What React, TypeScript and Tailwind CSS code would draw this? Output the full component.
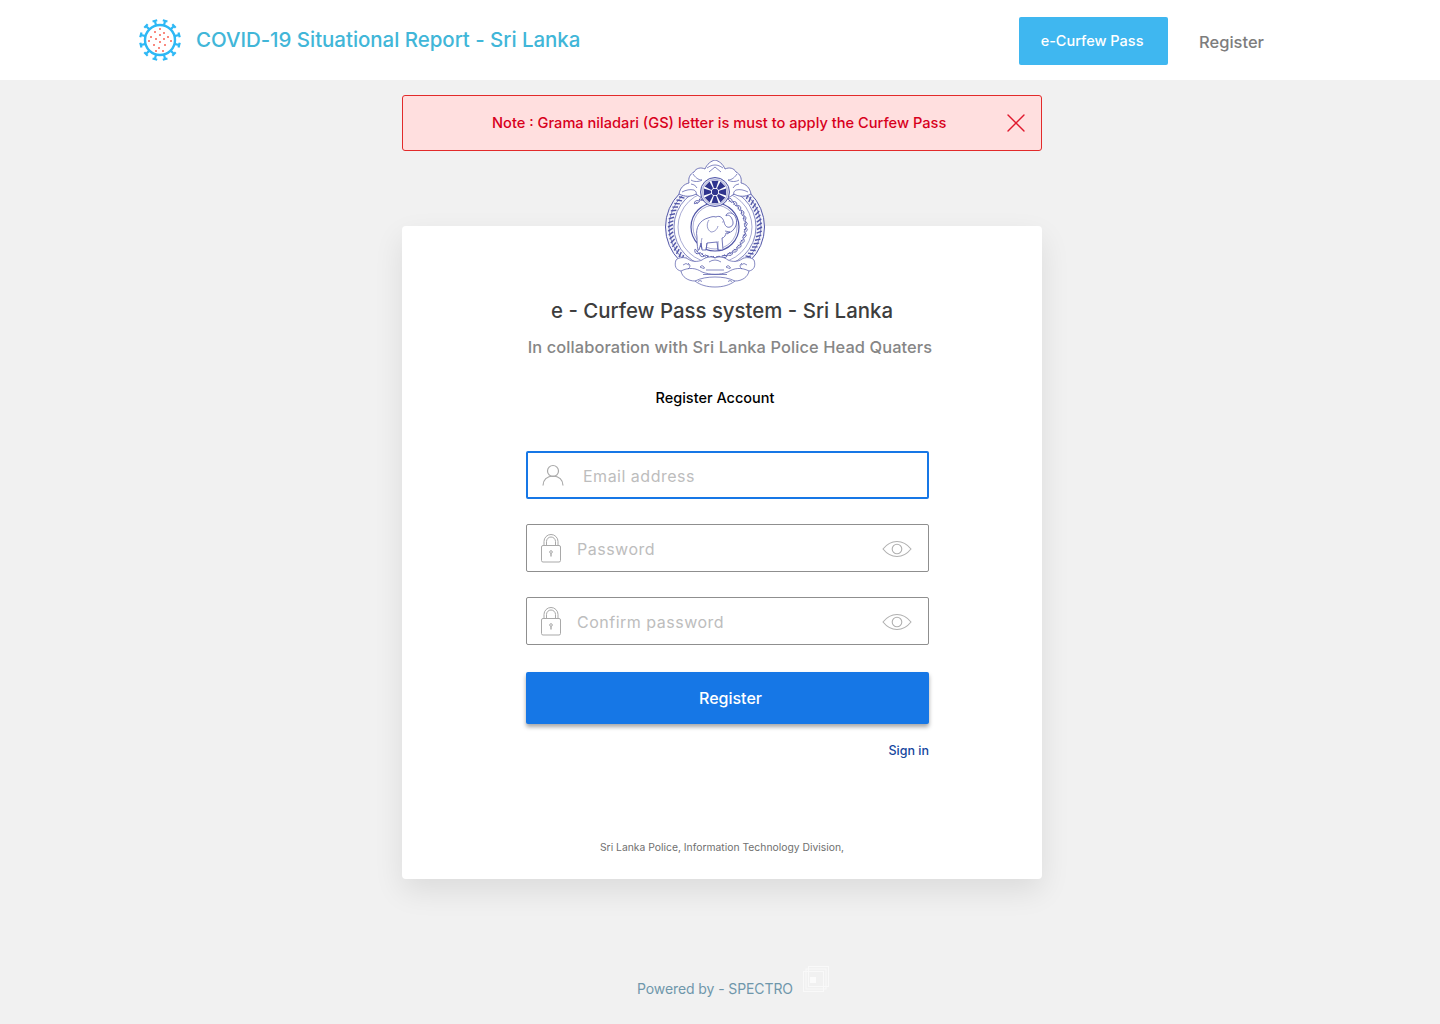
import { X } from "lucide-react";

const FONT = "font-['Inter','Noto_Sans',sans-serif]";

function VirusLogo() {
  const spikes = Array.from({ length: 12 }, (_, i) => i * 30);
  const dots = [
    [22, 11], [17, 14], [26, 15], [22, 17], [13, 19], [30, 19], [18, 21], [26, 21],
    [11, 23], [22, 24], [33, 23], [16, 27], [27, 27], [21, 30], [25, 33], [18, 33],
  ];
  return (
    <svg width="44" height="44" viewBox="0 0 44 44" className="shrink-0">
      <circle cx="22" cy="22" r="15" fill="none" stroke="#2eb8f5" strokeWidth="2.400" />
      {spikes.map((a) => (
        <g key={a} transform={`rotate(${a + 15} 22 22)`}>
          <path d="M22 7V2.500M19.600 2.200h4.800" stroke="#2eb8f5" strokeWidth="2.200" fill="none" />
        </g>
      ))}
      {dots.map(([x, y], i) => (
        <rect key={i} x={x - 1} y={y - 1} width="2" height="2" fill="#f98a80" />
      ))}
    </svg>
  );
}

function PoliceEmblem() {
  const c = "#5257a8";
  const spokes = Array.from({ length: 8 }, (_, i) => i * 45);
  const ticks = Array.from({ length: 72 }, (_, i) => i * 5);
  const marks = Array.from({ length: 24 }, (_, i) => i * 11 - 127);
  return (
    <svg width="100" height="128" viewBox="0 0 100 128" fill="none" stroke={c} strokeWidth="0.7">
      <ellipse cx="50" cy="67" rx="49.500" ry="48" fill="#f6f6fb" strokeWidth="1" />
      <ellipse cx="50" cy="67" rx="46" ry="44.500" />
      {ticks.map((a) => (
        <path key={a} d="M50 20l2.500 5" strokeWidth="1.400" transform={`rotate(${a} 50 67)`} />
      ))}
      <ellipse cx="50" cy="67" rx="41" ry="40" fill="#ffffff" />
      <ellipse cx="50" cy="67" rx="37" ry="36" strokeWidth="0.5" />
      {marks.map((a) => (
        <path
          key={a}
          d="M47.500 36q2.500-3 5 0t-5 0M50 36v2"
          strokeWidth="0.8"
          transform={`rotate(${a + 90} 50 67)`}
        />
      ))}
      <circle cx="50" cy="67" r="24" fill="#ffffff" strokeWidth="1.200" />
      <circle cx="50" cy="67" r="22" strokeWidth="0.5" />
      {/* elephant */}
      <path
        d="M33 90c-1-5-1-9-1-13-2-9 3-17 11-19 3-1 5-2 8-1 4-2 7 1 8 5 1 4 3 6 6 5 3-1 4-4 2-8-1-3-4-5-6-3 0-3 4-4 7-2 4 3 5 10 1 15-2 3-5 4-8 4 0 2-2 5-4 5l1 12h-5l-1-8-10 1-1 7h-4l-1-7-2 7z"
        fill="#ffffff"
        strokeWidth="0.8"
      />
      <path d="M44 60c-3 4-2 10 2 12 3 0 6-2 7-6M37 78c-1 3-1 7 0 11M42 83l-1 7M53 81v9" strokeWidth="0.6" />
      <path d="M60 71l5 1-3 2M57 62h.8" strokeWidth="0.7" />
      {/* side scrolls */}
      <path
        d="M14 34c1-6 5-10 10-11-1-5 1-9 5-11 2-4 7-5 11-3 2-5 6-8 10-9 4 1 8 4 10 9 4-2 9-1 11 3 4 2 6 6 5 11 5 1 9 5 10 11-6 3-12 3-17 0-8 8-30 8-38 0-5 3-11 3-17 0z"
        fill="#ffffff"
        strokeWidth="0.8"
      />
      <path d="M42 8c3-2 5-3 8-3s5 1 8 3M44 12l6-5 6 5M28 14c2 3 5 6 9 6-3 2-8 2-11 0M72 14c-2 3-5 6-9 6 3 2 8 2 11 0M17 32c4-2 8-3 12-2 2 1 3 3 2 5M83 32c-4-2-8-3-12-2-2 1-3 3-2 5M26 24q4 0 6 4M74 24q-4 0-6 4" />
      {/* dharma wheel */}
      <circle cx="50" cy="32" r="14.500" fill="#d9dcf0" strokeWidth="1" />
      <circle cx="50" cy="32" r="12.500" fill="#ffffff" stroke="#9094c8" />
      {spokes.map((a) => (
        <path
          key={a}
          d="M48.800 28l-2.300-7.200h7l-2.300 7.200z"
          fill="#30358e"
          stroke="none"
          transform={`rotate(${a} 50 32)`}
        />
      ))}
      <circle cx="50" cy="32" r="3.200" fill="#30358e" stroke="none" />
      {/* bottom scroll */}
      <path
        d="M11 100c-2 6 0 10 5 11 1 6 7 10 14 10 5 4 12 6 20 6s15-2 20-6c7 0 13-4 14-10 5-1 7-5 5-11-3-3-9-3-12-1-4 3-10 3-14 1-4-3-9-4-13-2-4-2-9-1-13 2-4 2-10 2-14-1-3-2-9-2-12 1z"
        fill="#ffffff"
      />
      <path d="M16 111c8-4 15-3 21 1 8 3 18 3 26 0 6-4 13-5 21-1M30 121c6-3 13-4 20-4s14 1 20 4M23 103q4 3 0 6M77 103q-4 3 0 6M41 110h18M38 114.500h24M33 121.500q2-2 4 0M63 121.500q2-2 4 0" />
      <path d="M35 107q2-3 4 0t-4 0M61 107q2-3 4 0t-4 0M44 102q6-4 12 0M18 105q3-3 6 0M76 105q3-3 6 0" />
    </svg>
  );
}

function UserIcon() {
  return (
    <svg width="22" height="22" viewBox="0 0 22 22" fill="none" stroke="#a9a9a9" strokeWidth="1.200">
      <circle cx="11" cy="7" r="5.500" />
      <path d="M1 21.500c0-5.500 4-9.500 10-9.500s10 4 10 9.500" />
    </svg>
  );
}

function LockIcon() {
  return (
    <svg width="22" height="30" viewBox="0 0 22 30" fill="none" stroke="#a9a9a9" strokeWidth="1">
      <rect x="1.500" y="12.500" width="19" height="16.500" rx="1.500" />
      <path d="M4 12.500V8.500a7 7 0 0 1 14 0v4" />
      <path d="M6.500 12.500V8.500a4.500 4.500 0 0 1 9 0v4" />
      <circle cx="11" cy="19" r="1.300" />
      <path d="M11 20.300v3.200" strokeWidth="1.400" />
    </svg>
  );
}

function EyeIcon() {
  return (
    <svg width="30" height="18" viewBox="0 0 30 18" fill="none" stroke="#b0b0b0" strokeWidth="1.100" className="mt-[2px]">
      <path d="M1 9c4-5 8.500-7.500 14-7.500S25 4 29 9c-4 5-8.500 7.500-14 7.500S5 14 1 9z" />
      <circle cx="15" cy="9" r="4.800" />
    </svg>
  );
}

function PasswordField({ placeholder }: { placeholder: string }) {
  return (
    <div className="flex h-12 w-[403px] items-center rounded-[2px] border border-[#8f8f8f] bg-white pl-[13px] pr-[16px]">
      <LockIcon />
      <input
        readOnly
        placeholder={placeholder}
        className="ml-[15px] min-w-0 flex-1 bg-transparent pt-[2px] text-[16px] tracking-[0.5px] text-[#444] outline-none placeholder:text-[#bdbdbd]"
      />
      <EyeIcon />
    </div>
  );
}

function SpectroMark() {
  return (
    <svg width="27" height="27" viewBox="0 0 27 27" fill="none" stroke="#f9f9f9" strokeWidth="1">
      <rect x="6.500" y="0.500" width="20" height="20" />
      <rect x="4" y="3" width="20" height="20" />
      <rect x="1.500" y="5.500" width="20" height="20" />
      <rect x="8" y="11" width="6" height="6" fill="#fbfbfb" stroke="none" />
    </svg>
  );
}

export default function App() {
  return (
    <div className={`${FONT} flex min-h-[1024px] flex-col bg-[#f1f1f1]`}>
      <header className="flex h-20 items-center justify-between bg-white pl-[138px] pr-[176px]">
        <div className="flex items-center gap-[14px]">
          <VirusLogo />
          <span className="mt-[1px] text-[20.500px] font-medium tracking-[-0.05px] text-[#41b6d8]">
            COVID-19 Situational Report - Sri Lanka
          </span>
        </div>
        <nav className="flex items-center gap-[31px]">
          <a className="mt-[2px] flex h-12 w-[149px] items-center justify-center rounded-[2px] bg-[#3fb7f0] pr-[3px] text-[14.500px] font-medium text-white">
            e-Curfew Pass
          </a>
          <a className="mt-1 text-[16.500px] font-medium text-[#7d7d7d]">Register</a>
        </nav>
      </header>

      <main className="flex flex-1 flex-col items-center pl-[4px]">
        <div className="mt-[15px] flex h-14 w-[640px] items-center rounded-[3px] border border-[#e22a2a] bg-[#ffdfdf] pl-[89px] pr-[9px]">
          <span className="flex-1 pt-[2px] text-[14.630px] font-medium text-[#d8001c]">
            Note : Grama niladari (GS) letter is must to apply the Curfew Pass
          </span>
          <X size={32} strokeWidth={1} className="text-[#e0182d]" />
        </div>

        <section className="relative mt-[75px] flex h-[653px] w-[640px] flex-col items-center rounded-[4px] bg-white shadow-[0_12px_30px_rgba(0,0,0,0.09)]">
          <div className="absolute left-[263px] top-[-66px]">
            <PoliceEmblem />
          </div>
          <h1 className="mt-[70px] text-[20.400px] font-medium text-[#3d3d3d]">
            e - Curfew Pass system - Sri Lanka
          </h1>
          <p className="mt-[8px] ml-[16px] text-[16.400px] font-medium tracking-[0.1px] text-[#868686]">
            In collaboration with Sri Lanka Police Head Quaters
          </p>
          <h2 className="mt-[28px] mr-[14px] text-[14.500px] font-medium text-black">Register Account</h2>

          <form className="mt-[42px] ml-[11px] flex flex-col">
            <div className="flex h-12 w-[403px] items-center rounded-[2px] border-2 border-[#1677e6] bg-white pl-[14px]">
              <UserIcon />
              <input
                readOnly
                placeholder="Email address"
                className="ml-[19px] min-w-0 flex-1 bg-transparent pt-[2px] text-[16px] tracking-[0.5px] text-[#444] outline-none placeholder:text-[#bdbdbd]"
              />
            </div>
            <div className="mt-[25px] flex flex-col gap-[25px]">
              <PasswordField placeholder="Password" />
              <PasswordField placeholder="Confirm password" />
            </div>
            <button
              type="button"
              className="mt-[27px] h-[52px] w-[403px] rounded-[2px] bg-[#1677e6] pl-[6px] text-[16px] font-medium text-white shadow-[0_3px_4px_rgba(0,0,0,0.35)]"
            >
              Register
            </button>
            <a className="mt-[18px] self-end text-[12.500px] font-medium text-[#17479e]">Sign in</a>
          </form>

          <p className="mt-auto mb-[23px] text-[10.350px] text-[#707070]">
            Sri Lanka Police, Information Technology Division,
          </p>
        </section>

        <footer className="ml-[22px] mt-[87px] flex items-end gap-[9px] pb-[26px]">
          <span className="text-[14px] tracking-[-0.1px] text-[#6f97ab]">Powered by - SPECTRO</span>
          <span className="mb-[6px]">
            <SpectroMark />
          </span>
        </footer>
      </main>
    </div>
  );
}
